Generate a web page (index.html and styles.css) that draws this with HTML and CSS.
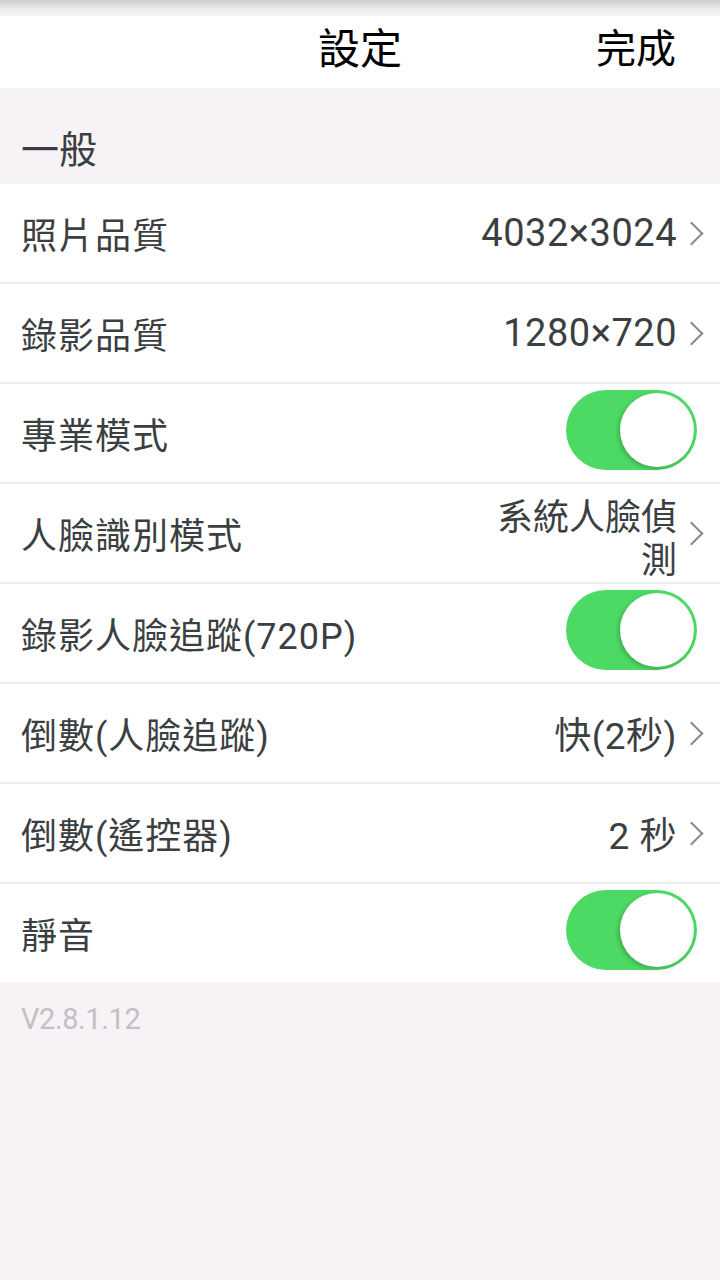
FILE: index.html
```html
<!DOCTYPE html>
<html lang="zh-Hant">
<head>
    <meta charset="UTF-8">
    <meta name="viewport" content="width=device-width, initial-scale=1.0">
    <title>設定</title>
    <link rel="stylesheet" href="styles.css">
</head>
<body>
    <div class="statusbar"></div>
    <header class="topbar">
        <h1>設定</h1>
        <span class="done">完成</span>
    </header>

    <div class="section-title">一般</div>

    <ul class="list">
        <li class="row">
            <span class="label">照片品質</span>
            <span class="value num">4032×3024</span>
            <span class="chevron"></span>
        </li>
        <li class="row">
            <span class="label">錄影品質</span>
            <span class="value num">1280×720</span>
            <span class="chevron"></span>
        </li>
        <li class="row">
            <span class="label">專業模式</span>
            <span class="switch on"><span class="knob"></span></span>
        </li>
        <li class="row">
            <span class="label">人臉識別模式</span>
            <span class="value wrap">系統人臉偵測</span>
            <span class="chevron"></span>
        </li>
        <li class="row">
            <span class="label">錄影人臉追蹤(720P)</span>
            <span class="switch on"><span class="knob"></span></span>
        </li>
        <li class="row">
            <span class="label">倒數(人臉追蹤)</span>
            <span class="value">快(2秒)</span>
            <span class="chevron"></span>
        </li>
        <li class="row">
            <span class="label">倒數(遙控器)</span>
            <span class="value">2 秒</span>
            <span class="chevron"></span>
        </li>
        <li class="row">
            <span class="label">靜音</span>
            <span class="switch on"><span class="knob"></span></span>
        </li>
    </ul>

    <div class="version">V2.8.1.12</div>
</body>
</html>
```

FILE: styles.css
```css
body {
    margin: 0;
    background: #f6f2f6;
    font-family: Roboto, "Noto Sans CJK TC", sans-serif;
    color: #3b3f41;
    width: 720px;
    min-height: 1280px;
}
.statusbar {
    height: 16px;
    background: linear-gradient(to bottom, #cdcdcd, #ededed 60%, #f4f2f4);
}
.topbar {
    height: 72px;
    background: #fff;
    display: flex;
    align-items: center;
    justify-content: center;
    position: relative;
    box-sizing: border-box;
    padding-bottom: 12px;
}
.topbar h1 {
    margin: 0;
    font-family: "Noto Sans CJK TC", sans-serif;
    font-weight: 400;
    font-size: 42px;
    color: #000;
    line-height: 1;
}
.done {
    position: absolute;
    right: 44px;
    top: 8px;
    font-family: "Noto Sans CJK TC", sans-serif;
    font-size: 40px;
    color: #000;
    line-height: 1.1;
}
.section-title {
    height: 96px;
    display: flex;
    align-items: center;
    padding: 20px 21px 0;
    font-family: "Noto Sans CJK TC", sans-serif;
    font-size: 38px;
    box-sizing: border-box;
}
.list {
    list-style: none;
    margin: 0;
    padding: 0;
    background: #fff;
}
.row {
    height: 98px;
    display: flex;
    align-items: center;
    padding: 0 10px 0 21px;
    border-bottom: 2px solid #eeebee;
    overflow: hidden;
}
.row:last-child {
    border-bottom: none;
}
.label {
    flex: 1;
    font-size: 36px;
    letter-spacing: 1px;
    white-space: nowrap;
}
.value {
    font-size: 37px;
    text-align: right;
    letter-spacing: 0.5px;
}
.value.num {
    font-size: 38px;
}
.value.wrap {
    width: 184px;
    font-size: 36px;
    letter-spacing: 0;
    line-height: 43px;
    margin-top: 14px;
}
.chevron {
    width: 15px;
    height: 15px;
    border-right: 2.5px solid #8a8a8a;
    border-top: 2.5px solid #8a8a8a;
    transform: rotate(45deg);
    margin: 0 10px 0 6px;
}
.switch {
    width: 131px;
    height: 80px;
    border-radius: 40px;
    background: #4cd964;
    position: relative;
    margin-right: 13px;
    margin-top: -6px;
}
.knob {
    position: absolute;
    right: 3px;
    top: 3px;
    width: 74px;
    height: 74px;
    border-radius: 50%;
    background: #fff;
    box-shadow: -2px 2px 4px rgba(0, 0, 0, 0.2);
}
.version {
    padding: 20px 21px;
    font-size: 29px;
    color: #c3bfc3;
    letter-spacing: -0.4px;
}
```
